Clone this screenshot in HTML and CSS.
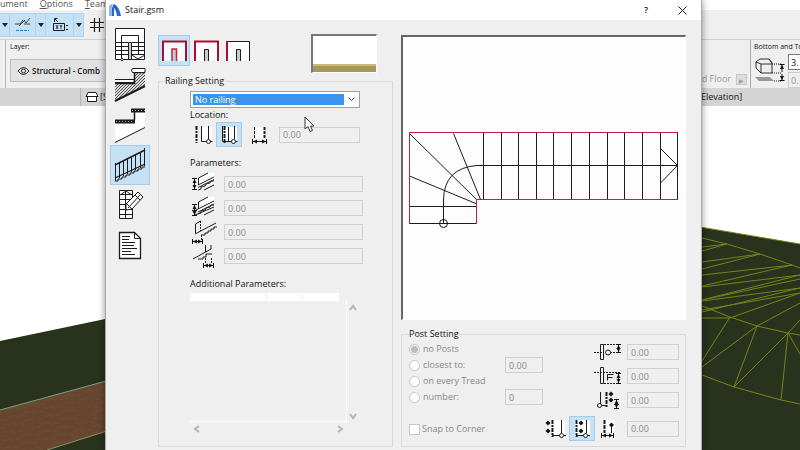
FILE: index.html
```html
<!DOCTYPE html>
<html lang="en">
<head>
<meta charset="utf-8">
<title>Stair.gsm</title>
<link rel="stylesheet" href="styles.css">
</head>
<body>
<svg class="defs" aria-hidden="true">
  <defs>
    <pattern id="hatch" width="3" height="3" patternUnits="userSpaceOnUse"><rect width="3" height="3" fill="#d8d8d8"/><path d="M0 3L3 0" stroke="#444" stroke-width=".9"/></pattern>
    <pattern id="bark" width="17" height="8" patternUnits="userSpaceOnUse" patternTransform="rotate(12)"><rect width="17" height="8" fill="#66462f"/><path d="M0 2h5M8 4h7M3 6h5" stroke="#704e36"/></pattern>
    <marker id="tip" markerWidth="5" markerHeight="6" refX="4" refY="3" orient="auto-start-reverse" markerUnits="userSpaceOnUse"><path d="M0 1L4 3L0 5z" fill="#111" stroke="none"/><path d="M4.500 0.500v5" stroke="#111"/></marker>
    <path id="diamond" d="M0-2.500L2.500 0L0 2.500L-2.500 0z" fill="#111" stroke="none"/>
  </defs>
</svg>

<div class="app">
  <nav class="menu">
    <a href="#">ument</a>
    <a href="#"><u>O</u>ptions</a>
    <a href="#"><u>T</u>eam</a>
  </nav>
  <div class="toolbar">
    <button class="tool arrow" aria-label="More"><svg width="6" height="4" viewBox="0 0 6 4"><path d="M0 0h6L3 4z"/></svg></button>
    <button class="tool" aria-label="Snap guides"><svg width="19" height="20" viewBox="0 0 19 20"><path d="M2 9h5l3-4M6 11l6-6M11 9h6M11 5l2 3 4-5" stroke-width=".8"/><path d="M3 15.500h13" stroke="#2a7fc4" stroke-dasharray="3 1"/></svg></button>
    <button class="tool arrow" aria-label="Snap options"><svg width="6" height="4" viewBox="0 0 6 4"><path d="M0 0h6L3 4z"/></svg></button>
    <button class="tool wide" aria-label="Coordinates"><svg width="18" height="20" viewBox="0 0 18 20"><path d="M3.500 7V3.500h3M4 4l3 3M2.500 8.500h11v7h-11zM15 10.500h2M15 14.500h2"/><path d="M5 10l2 4M7 10l-2 4M9 10l1 2 1-2M10 12v2" stroke-width=".8"/></svg></button>
    <button class="tool arrow" aria-label="Coordinate options"><svg width="6" height="4" viewBox="0 0 6 4"><path d="M0 0h6L3 4z"/></svg></button>
    <button class="tool plain" aria-label="Grid"><svg width="16" height="16" viewBox="0 0 16 16"><path d="M5.500 1v14M10.500 1v14M1 5.500h14M1 10.500h14" stroke-width="1.200"/></svg></button>
  </div>
  <div class="info">
    <div class="layer">
      <span>Layer:</span>
      <button class="layer-pick"><svg width="13" height="10" viewBox="0 0 14 10"><path d="M1 5Q7-2.500 13 5Q7 12.500 1 5z"/><circle cx="7" cy="5" r="2.200"/></svg><b>Structural - Comb</b></button>
    </div>
    <div class="floor"><span>d Floor</span><button aria-label="Pick floor">▶</button></div>
    <div class="levels">
      <label for="top">Bottom and To</label>
      <div class="level-row">
        <svg width="32" height="28" viewBox="0 0 32 28"><path d="M2 5l4-3h9l3 4v10H7L2 11zM2 5l5 2h11M7 7v9M15 2l3 4" stroke-width=".9"/><path d="M18 7h10M18 16h10M20 24h8" stroke-dasharray="1 1"/><path d="M28 8v7M28 17v6" marker-start="url(#tip)" marker-end="url(#tip)"/><path d="M1 20h15l4 4H5z" fill="#999" stroke="none"/></svg>
        <div class="level-inputs"><input id="top" value="3."><input class="off" aria-label="Bottom" value="0." disabled></div>
      </div>
    </div>
  </div>
  <div class="tabs">
    <a class="tab" href="#"><svg width="14" height="12" viewBox="0 0 14 12"><path d="M2.500 5.500v5h9v-5M1 5.500l2-4h8l2 4z" fill="#fff"/></svg>[S</a>
    <a class="tab end" href="#">Elevation]</a>
  </div>
  <svg class="scene" viewBox="0 0 800 344" preserveAspectRatio="none" aria-hidden="true">
    <rect width="800" height="344" fill="#fff"/>
    <path d="M0 235L110 212V344H0z" fill="#29321d"/>
    <path d="M0 304L110 274V324L47 344H0z" fill="url(#bark)"/>
    <path d="M0 304L110 274" stroke="#79a087" fill="none"/>
    <path d="M47 344L110 324" stroke="#8f906a" fill="none"/>
    <path d="M700 121L800 138V344H700z" fill="#29321d"/>
    <g fill="none" stroke="#77841a">
      <path d="M700 121L800 138M702 132L727 138L760 148L792 159L800 162"/>
      <path d="M702 141L727 138L702 145M702 156L760 148L702 163M702 169L792 159L702 180M702 181L800 169L702 194M702 195L800 182L702 206M702 194L800 173M702 204L800 187"/>
      <path d="M702 200L730 211L757 220L788 227L800 229M702 212H730L800 187M757 220L800 197M788 227L800 214"/>
      <path d="M730 211L702 255M757 220L702 261M757 220L734 281L788 227L781 294M788 227L800 248M702 269L734 281L781 294L800 298"/>
    </g>
  </svg>
</div>

<main class="dialog">
  <header class="title">
    <svg class="logo" width="12" height="12" viewBox="0 0 12 12"><path d="M0 12V2Q1 0 4 0Q2 4 3 12z" fill="#8db8ee"/><path d="M3 12Q2 3 5 0Q10 2 12 12H8Q7 6 5 4V12z" fill="#2267cf"/></svg>
    <h1>Stair.gsm</h1>
    <button aria-label="Help">?</button>
    <button aria-label="Close"><svg width="9" height="9" viewBox="0 0 9 9"><path d="M.5.5l8 8M8.500.5l-8 8"/></svg></button>
  </header>
  <div class="body">
    <nav class="pages">
      <button aria-label="Stair plan"><svg viewBox="0 0 40 40"><path d="M5.500 3.500h29v31h-29z" fill="#fff"/><path d="M11.500 17V10.500h17V17M5 17.500h13M5 21.500h13M5 25.500h13M5 29.500h13M22 17.500h13M22 21.500h13M22 25.500h13M22 29.500h13M11.500 17v17M28.500 17v13M22 30l6 4 7-4"/><path d="M18.500 17.500h3v17h-3z" fill="#ccc"/><circle cx="12" cy="34.500" r="1.200" fill="#fff"/></svg></button>
      <button aria-label="Structure"><svg viewBox="0 0 40 40"><path d="M5 19h20V8h10v13L5 36z" fill="url(#hatch)" stroke="none"/><path d="M5 18.500h19.500V7.500H35" stroke-width="1.500"/><path d="M5 36L35 21" stroke-width="2"/><path d="M35 3.500H22.500q-2 2 0 4H35zM5 14.500h19v3H5" fill="#fff"/></svg></button>
      <button aria-label="Treads"><svg viewBox="0 0 40 40"><path d="M5 18h20V7h10v14L5 37z" fill="#fff" stroke="none"/><path d="M21 5.500h14M5 16.500h20" stroke-width="4"/><path d="M22 5.500h13M6 16.500h18" stroke="#aaa" stroke-dasharray="1 2"/><path d="M24.500 7v8" stroke-width="1.500"/><path d="M5 37.500L35 22.500"/></svg></button>
      <button class="on" aria-label="Railing"><svg viewBox="0 0 40 40"><path d="M5 20L35 5" stroke-width="1.500"/><path d="M5.500 18v18M9.500 18v15M13.500 16v15M17.500 14v15M21.500 12v15M25.500 10v15M30.500 8v15M34.500 3v18"/><path d="M5 33L35 19" stroke-width="1.200"/><path d="M5 36h3v-2h4v-2h4v-2h4v-2h4v-2h4v-2h4v-2h3" stroke-width="1"/></svg></button>
      <button aria-label="2D representation"><svg viewBox="0 0 40 40"><path d="M9.500 5.500h13v28h-13z" fill="#fff"/><path d="M15.500 6v27M9 9.500h14M9 14.500h14M9 19.500h14M9 24.500h14M9 29.500h14M10 10l6-4 6 4"/><path d="M28 7l5 5-11 12-6 1 0-6z" fill="#fff"/><path d="M30.500 9.500L18 23M25 10l5 5M17 19l5 5"/></svg></button>
      <button aria-label="Listing"><svg viewBox="0 0 40 40"><path d="M9.500 7.500h15l6 6v20h-21z" fill="#fff" stroke-width="1.300"/><path d="M24.500 8v5.500h6"/><path d="M12 11.500h8M12 14.500h7M12 17.500h13M12 20.500h12M12 23.500h15M12 26.500h9M12 29.500h13"/></svg></button>
    </nav>

    <section class="railing">
      <div class="sides">
        <button class="on" aria-label="Both sides"><svg viewBox="0 0 32 31"><path d="M5 26V6.500h23V26" fill="#f4fafd" stroke="#a80f2c" stroke-width="2"/><path d="M14 26V14h4.500V26" fill="#b9cfdd" stroke="#d0202c" stroke-width="1.500"/></svg></button>
        <button aria-label="Outer side"><svg viewBox="0 0 32 31"><path d="M5 26V6.500h23V26" fill="#fff" stroke="#a80f2c" stroke-width="2"/><path d="M14.500 26V14.500h4V26" fill="#ccc"/></svg></button>
        <button aria-label="Left side"><svg viewBox="0 0 32 31"><path d="M5 26V6.500h22.500V26" fill="#fff"/><path d="M5 26V6" stroke="#a80f2c" stroke-width="2"/><path d="M14.500 26V14.500h4V26" fill="#ccc"/></svg></button>
        <div class="swatch"></div>
      </div>
      <fieldset class="group">
        <legend>Railing Setting</legend>
        <select aria-label="Railing type"><option>No railing</option></select>
        <p class="caption">Location:</p>
        <div class="location">
          <button aria-label="Outside"><svg viewBox="0 0 26 25"><path d="M11 5h11v15H11z" fill="#fff" stroke="none"/><path d="M6.500 4v17" stroke-width="2" stroke-dasharray="4 1 2 1"/><path d="M11.500 4v15.500h11M18.500 4v13"/><circle cx="18.500" cy="19.500" r="2" fill="#fff"/></svg></button>
          <button class="on" aria-label="Inside"><svg viewBox="0 0 26 25"><path d="M6 5h15v15H6z" fill="#fff" stroke="none"/><path d="M8.500 4v17" stroke-width="2" stroke-dasharray="4 1 2 1"/><path d="M6.500 4v15.500h15M12.500 5v14M18.500 4v13"/><circle cx="17.500" cy="19.500" r="2" fill="#fff"/></svg></button>
          <button class="apart" aria-label="Offset"><svg viewBox="0 0 26 25"><path d="M8 5h11v12H8z" fill="#fff" stroke="none"/><path d="M8.500 5v12" stroke-dasharray="3 1"/><path d="M18.500 5v12" stroke-dasharray="3 1" stroke-width="2"/><path d="M7 19.500h13" marker-start="url(#tip)" marker-end="url(#tip)"/></svg></button>
          <input aria-label="Offset" value="0.00" disabled>
        </div>
        <p class="caption params-caption">Parameters:</p>
        <div class="params">
          <label for="p1"><svg viewBox="0 0 28 24"><path d="M8 6L18 1h6v9L8 18z" fill="#fff" stroke="none"/><path d="M4.500 7v10" marker-start="url(#tip)" marker-end="url(#tip)"/><path d="M8.500 13V6L18 1M8 13L24 5M8 15.500L24 7.500M8 18l3-1v-2l4-1 1-2 4-1 1-2 3 0M14 18L24 13"/></svg></label><input id="p1" aria-label="Handrail height" value="0.00" disabled>
          <label for="p2"><svg viewBox="0 0 28 24"><path d="M8 6L18 1h6v9L8 18z" fill="#fff" stroke="none"/><path d="M4.500 9v10" marker-start="url(#tip)" marker-end="url(#tip)"/><path d="M2 14.500h5M8.500 13V6L18 1M4 15L24 5M8 16L24 8M8 18l3-1v-2l4-1 1-2 4-1 1-2 3 0M5 19L24 11M14 19l10-5"/></svg></label><input id="p2" aria-label="Lower rail height" value="0.00" disabled>
          <label for="p3"><svg viewBox="0 0 28 24"><path d="M5.500 13V4l5-3" /><path d="M10.500 1v10" stroke-dasharray="2 1"/><path d="M5 14L26 3M11 15h4v-2h3v-2h3V9h3V7h3"/><path d="M11.500 15v6" stroke-dasharray="2 1"/><path d="M3 21.500h9" marker-start="url(#tip)" marker-end="url(#tip)"/></svg></label><input id="p3" aria-label="Bottom extension" value="0.00" disabled>
          <label for="p4"><svg viewBox="0 0 28 24"><path d="M3 15L21 5V1M8 15h5v-2h3v-3h6M15.500 1v7"/><path d="M15.500 14v5M21.500 14v5" stroke-dasharray="2 1"/><path d="M14 21.500h9" marker-start="url(#tip)" marker-end="url(#tip)"/></svg></label><input id="p4" aria-label="Top extension" value="0.00" disabled>
        </div>
        <p class="caption more-caption">Additional Parameters:</p>
        <div class="list">
          <div class="list-head"><span></span><span></span><span></span></div>
          <div class="list-body"></div>
          <div class="scroll vertical"><button aria-label="Scroll up"><svg viewBox="0 0 8 8"><path d="M1 6l3-4 3 4"/></svg></button><button aria-label="Scroll down"><svg viewBox="0 0 8 8"><path d="M1 2l3 4 3-4"/></svg></button></div>
          <div class="scroll horizontal"><button aria-label="Scroll left"><svg viewBox="0 0 8 8"><path d="M6 1L2 4l4 3"/></svg></button><button aria-label="Scroll right"><svg viewBox="0 0 8 8"><path d="M2 1l4 3-4 3"/></svg></button></div>
        </div>
      </fieldset>
    </section>

    <section class="side">
      <div class="preview">
        <svg viewBox="403 37 282 282">
          <path d="M409.500 223.500h67M409.500 206.500h67M409.500 133.500L476.500 199.500M409.500 176L477 204M453.500 133.500L480.500 199.500M483.500 133v66M501.500 133v66M518.500 133v66M536.500 133v66M553.500 133v66M571.500 133v66M589.500 133v66M607.500 133v66M624.500 133v66M642.500 133v66M660.500 133v66M677.500 133v66M443.500 224V200Q444 168 477 165.500H677M660.500 148.500L677.500 165.500L660.500 183"/>
          <circle cx="443.500" cy="223.500" r="4"/>
          <path d="M476.500 223.500v-24.500M409.500 224v-91.500h268.500M678 199.500h-201.500" stroke="#c0203c"/>
        </svg>
      </div>
      <fieldset class="group posts">
        <legend>Post Setting</legend>
        <div class="choices">
          <input type="radio" name="post" id="r1" checked disabled><label for="r1">no Posts</label><span></span>
          <input type="radio" name="post" id="r2" disabled><label for="r2">closest to:</label><input aria-label="Closest distance" value="0.00" disabled>
          <input type="radio" name="post" id="r3" disabled><label for="r3">on every Tread</label><span></span>
          <input type="radio" name="post" id="r4" disabled><label for="r4">number:</label><input aria-label="Number of posts" value="0" disabled>
        </div>
        <div class="params sizes">
          <label for="s1"><svg viewBox="0 0 28 24"><path d="M6.500 4.500h3v15h-3z" fill="#fff"/><path d="M0 12.500h10M16 12.500h10M10 4.500h12" stroke-dasharray="2 1"/><circle cx="14" cy="12.500" r="2.500" fill="#efefef"/><path d="M24.500 5v7" marker-start="url(#tip)" marker-end="url(#tip)"/></svg></label><input id="s1" aria-label="Height above rail" value="0.00" disabled>
          <label for="s2"><svg viewBox="0 0 28 24"><path d="M6.500 3.500h3v16h-3z" fill="#fff"/><path d="M0 8.500h26M10 19.500h14" stroke-dasharray="2 1"/><path d="M13.500 16.500v-6h6M13.500 13.500h5"/><path d="M24.500 10v9" marker-start="url(#tip)" marker-end="url(#tip)"/></svg></label><input id="s2" aria-label="Depth below rail" value="0.00" disabled>
          <label for="s3"><svg viewBox="0 0 28 24"><path d="M6.500 4v12M3 17.500h9"/><circle cx="5.500" cy="17.500" r="2" fill="#fff"/><path d="M12.500 4v16" stroke-width="2" stroke-dasharray="4 1 2 1"/><use href="#diamond" x="17" y="6"/><use href="#diamond" x="17" y="12"/><path d="M22.500 12v8" marker-start="url(#tip)" marker-end="url(#tip)"/><path d="M20 16.500h5"/></svg></label><input id="s3" aria-label="Post spacing" value="0.00" disabled>
        </div>
        <div class="snap">
          <input type="checkbox" id="snap" disabled><label for="snap">Snap to Corner</label>
        </div>
        <div class="location post-place">
          <button aria-label="Posts outside"><svg viewBox="0 0 26 25"><path d="M10 4h12v15H10z" fill="#fff" stroke="none"/><use href="#diamond" x="5" y="7"/><use href="#diamond" x="5" y="15"/><path d="M9.500 4v17" stroke-width="2" stroke-dasharray="4 1 2 1"/><path d="M18.500 4v13M9 19.500h14"/><circle cx="18.500" cy="19.500" r="2" fill="#fff"/></svg></button>
          <button class="on" aria-label="Posts inside"><svg viewBox="0 0 26 25"><path d="M6 4h15v16H6z" fill="#fff" stroke="none"/><use href="#diamond" x="12" y="7"/><use href="#diamond" x="12" y="15"/><path d="M7.500 4v17" stroke-width="2" stroke-dasharray="4 1 2 1"/><path d="M17.500 4v13M7 19.500h14"/><circle cx="16.500" cy="19.500" r="2" fill="#fff"/></svg></button>
          <button aria-label="Post offset"><svg viewBox="0 0 26 25"><path d="M9 4h11v12H9z" fill="#fff" stroke="none"/><path d="M9.500 4v13" stroke-width="2" stroke-dasharray="4 1"/><use href="#diamond" x="16.500" y="9"/><path d="M16.500 11v6"/><path d="M7 19.500h11" marker-start="url(#tip)" marker-end="url(#tip)"/></svg></button>
          <input aria-label="Post offset" value="0.00" disabled>
        </div>
      </fieldset>
    </section>
  </div>
  <svg class="cursor" width="12" height="17" viewBox="0 0 12 17"><path d="M1 1v12l3-2.500 2 5 2.500-1-2-4.500H10z"/></svg>
</main>
</body>
</html>
```
FILE: styles.css
```css
* { box-sizing: border-box; }
body {
  margin: 0;
  height: 100vh;
  overflow: hidden;
  position: relative;
  background: #fff;
  color: #111;
  font: 9px/12px "Open Sans", "Noto Sans", sans-serif;
}
.defs { position: absolute; width: 0; height: 0; }
svg { display: block; fill: none; stroke: #1c1c1c; flex: none; }
pattern rect { stroke: none; }
button, input, select { font: inherit; color: inherit; margin: 0; padding: 0; }
button { border: 0; background: none; display: grid; place-items: center; }
a { color: inherit; text-decoration: none; }
p, h1 { margin: 0; font-size: inherit; font-weight: 500; }

/* application behind the dialog */
.app { display: flex; flex-direction: column; height: 100%; background: #efefef; }
.menu { display: flex; gap: 12px; height: 10px; flex: none; align-items: flex-end; background: #fff; color: #555; }
.toolbar { display: flex; height: 30px; flex: none; padding: 3px 0 2px; border-bottom: 1px solid #d0d0d0; }
.tool { width: 26px; border: 1px solid #aed3ee; border-left: 0; background: #c5e1f5; }
.tool.wide { width: 28px; }
.tool.arrow { width: 10px; }
.tool.arrow svg { fill: #222; stroke: none; }
.tool.plain { border: 0; background: none; }
.info { display: flex; height: 48px; flex: none; }
.layer { margin-left: 5px; padding-left: 4px; border-left: 1px solid #b8b8b8; font-size: 7px; width: 110px; flex: none; }
.layer span { display: block; padding-top: 1px; }
.layer-pick { display: flex; align-items: center; gap: 2px; height: 23px; margin-top: 6px; padding: 0 6px; width: 130px; border: 1px solid #bdbdbd; background: #e2e2e2; font-size: 8px; white-space: nowrap; }
.layer-pick b { font-weight: 600; }
.floor { margin-left: auto; display: flex; align-items: flex-end; gap: 5px; padding: 0 3px 3px 0; color: #9a9a9a; }
.floor button { width: 11px; height: 11px; border: 1px solid #c8c8c8; background: #ddd; font-size: 6px; }
.levels { width: 50px; flex: none; border-left: 1px solid #aaa; padding-left: 3px; font-size: 7px; white-space: nowrap; overflow: hidden; }
.levels label { display: block; padding-top: 1px; }
.level-row { display: flex; align-items: center; gap: 2px; }
.level-inputs { display: grid; gap: 2px; font-size: 9px; padding-top: 1px; }
.level-inputs input { width: 40px; height: 16px; border: 1px solid #777; padding: 0 2px; background: #fff; }
.level-inputs .off { border-color: #ccc; background: #efefef; color: #999; }
.tabs { display: flex; justify-content: space-between; height: 18px; flex: none; background: #d4d4d4; padding-left: 80px; }
.tab { display: flex; align-items: center; gap: 1px; border-left: 1px solid #b4b4b4; padding-left: 4px; }
.tab.end { width: 99px; border: 0; padding: 0; }
.scene { width: 100%; flex: 1; min-height: 0; stroke: none; }

/* dialog window */
.dialog { position: absolute; inset: 0 98px 0 105px; overflow: hidden; background: #efefef; border: solid #aaa; border-width: 0 1px; box-shadow: 0 0 7px rgba(0, 0, 0, .45); }
.title { display: flex; align-items: center; gap: 4px; height: 20px; padding: 0 9px 0 3px; background: #fff; }
.title .logo { stroke: none; }
.title h1 { flex: 1; }
.title button { width: 20px; height: 20px; margin-left: 12px; font-weight: 600; }
.body { display: flex; padding: 5px 15px 0 4px; }
.pages { display: grid; grid-auto-rows: 40px; width: 40px; flex: none; align-content: start; }
.pages button, .sides button, .location button { display: block; border: 1px solid transparent; }
.pages svg, .sides svg, .location svg { width: calc(100% + 2px); margin: -1px; overflow: visible; }
button.on { background: #c5e1f6; border-color: #a5cdeb !important; }

.railing { width: 235px; flex: none; margin-left: 8px; padding-top: 9px; }
.sides { display: flex; height: 41px; }
.sides button { width: 32px; height: 31px; margin-top: 1px; }
.swatch { width: 66px; height: 39px; margin-left: 57px; border: 1px solid #fff; border-top: 2px solid #777; border-left: 2px solid #777; background: linear-gradient(#fff 28px, #c9b878 28px, #c9b878 30px, #a8975d 30px); }
.group { margin: 0; border: 1px solid #dadada; min-width: 0; padding: 0 6px; }
.group legend { padding: 0 2px; font-weight: 500; }
.railing .group { padding: 4px 28px 10px 31px; }
.railing legend { margin-left: -27px; }
.group select { display: block; appearance: none; width: 170px; height: 17px; padding: 0 4px; border: 1px solid #a0a0a0; color: #fff; background: url("data:image/svg+xml,%3Csvg xmlns='http://www.w3.org/2000/svg' width='7' height='5'%3E%3Cpath d='M.5.5l3 3 3-3' fill='none' stroke='%23444'/%3E%3C/svg%3E") no-repeat right 4px center, linear-gradient(#3a94ee, #3a94ee) no-repeat 2px 2px / 151px 11px, #fff; }
.caption { font-weight: 500; }
.group select + .caption { margin-top: 1px; }
.location { display: flex; align-items: center; margin-top: 1px; }
.location button { width: 26px; height: 25px; }
.location .apart { margin-left: 4px; }
.location input { width: 81px; margin-left: 7px; }
.group input:not([type]) { height: 16px; min-width: 0; padding: 0 3px; border: 1px solid #cfcfcf; background: #efefef; color: #888; }
.params-caption { margin-top: 10px; }
.params { display: grid; grid-template-columns: 28px 139px; grid-auto-rows: 24px; column-gap: 6px; align-items: center; margin-top: 3px; }
.params svg { width: 28px; height: 24px; overflow: visible; }
.more-caption { margin-top: 10px; }
.list { display: grid; grid-template-columns: 157px 12px; grid-template-rows: 8px 121px 14px; margin-top: 3px; }
.list-head { grid-column: 1 / 3; display: grid; grid-template-columns: 76px 35px 36px; gap: 1px; }
.list-head span { background: #fff; }
.list-body { border: solid #fff; border-width: 0 1px 1px 0; }
.scroll { display: flex; justify-content: space-between; align-items: center; }
.scroll svg { width: 8px; height: 8px; stroke: #b4b4b4; stroke-width: 2; }
.vertical { flex-direction: column; padding: 3px 0 2px; }
.horizontal { padding: 0 3px; }

.side { flex: 1; min-width: 0; margin-left: 8px; padding-top: 10px; }
.preview { border: 2px solid #666; border-right: 1px solid #fff; border-bottom: 1px solid #fff; background: #fdfdfd; }
.preview svg { width: 100%; height: auto; }
.posts { display: grid; grid-template-columns: 1fr auto; margin-top: 8px; padding: 0 7px 5px; color: #888; }
.posts legend { color: #111; padding: 0; }
.choices { display: grid; grid-template-columns: 12px 84px 38px; grid-auto-rows: 16px; align-items: center; padding-top: 1px; }
.choices label, .snap label { padding-left: 2px; }
input[type="radio"], input[type="checkbox"] { appearance: none; width: 11px; height: 11px; border: 1px solid #c6c6c6; background: #fff; }
input[type="radio"] { border-radius: 50%; }
input[type="radio"]:checked { background: radial-gradient(#bcbcbc 3px, #f5f5f5 4px); }
.params.sizes { grid-template-columns: 28px 52px; column-gap: 5px; margin-top: 0; justify-content: end; }
.snap { display: flex; align-items: center; padding-top: 5px; }
.post-place { margin-top: 4px; }
.post-place input { width: 52px; margin-left: 6px; }
.cursor { position: absolute; left: 198px; top: 116px; fill: #fff; stroke: #333; }
```
